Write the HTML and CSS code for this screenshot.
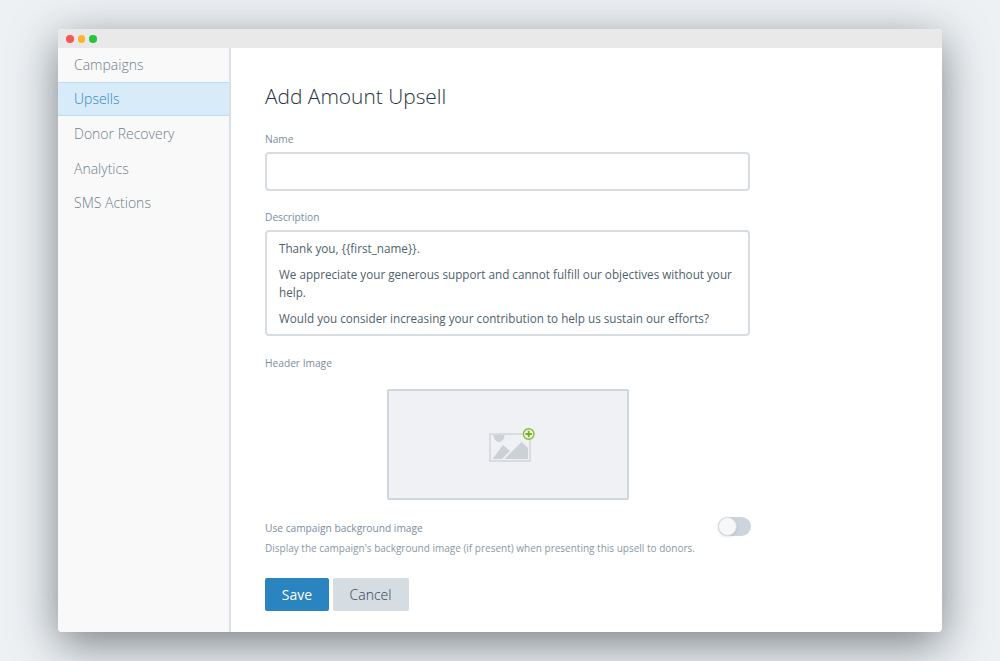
FILE: index.html
```html
<!DOCTYPE html>
<html lang="en">
<head>
<meta charset="utf-8">
<title>Add Amount Upsell</title>
<link rel="stylesheet" href="styles.css">
</head>
<body>
<div class="window">
  <div class="titlebar">
    <span class="dot dot-red"></span><span class="dot dot-yellow"></span><span class="dot dot-green"></span>
  </div>
  <div class="body">
    <nav class="sidebar">
      <a class="nav-item">Campaigns</a>
      <a class="nav-item active">Upsells</a>
      <a class="nav-item">Donor Recovery</a>
      <a class="nav-item">Analytics</a>
      <a class="nav-item">SMS Actions</a>
    </nav>
    <main class="content">
      <h1 class="title">Add Amount Upsell</h1>
      <div class="label name-label">Name</div>
      <div class="input"></div>
      <div class="label desc-label">Description</div>
      <div class="textarea">
        <p>Thank you, {{first_name}}.</p>
        <p>We appreciate your generous support and cannot fulfill our objectives without your help.</p>
        <p>Would you consider increasing your contribution to help us sustain our efforts?</p>
      </div>
      <div class="label header-label">Header Image</div>
      <div class="dropzone">
        <svg class="image-icon" width="46" height="34" viewBox="0 0 46 34">
          <rect x="1" y="6" width="40" height="27" fill="none" stroke="#d3d8dd" stroke-width="1.6"/>
          <path d="M4.5 7a5.5 7 0 0 0 11 0z" fill="#ccd1d6"/>
          <path d="M3.5 31 L14 17 L21 23 L13 31z" fill="#ccd1d6"/>
          <path d="M15.5 31 L32.7 13.7 L39 20 L39 31z" fill="#ccd1d6"/>
          <circle cx="39.7" cy="6" r="5.3" fill="#eff1f5" stroke="#86bc2b" stroke-width="1.4"/>
          <path d="M39.7 2.8v6.4M36.5 6h6.4" stroke="#74ae1c" stroke-width="1.8"/>
        </svg>
      </div>
      <div class="toggle-row">
        <span class="label">Use campaign background image</span>
        <span class="toggle"><span class="knob"></span></span>
      </div>
      <div class="hint">Display the campaign's background image (if present) when presenting this upsell to donors.</div>
      <div class="actions">
        <button class="btn btn-save">Save</button>
        <button class="btn btn-cancel">Cancel</button>
      </div>
    </main>
  </div>
</div>
</body>
</html>
```
FILE: styles.css
```css
* { box-sizing: border-box; }
html, body { height: 100%; }
body {
  margin: 0;
  padding: 29px 58px 0;
  background: #edf1f4;
  font-family: "Open Sans", "Liberation Sans", sans-serif;
  overflow: hidden;
}
.window {
  width: 884px;
  height: 603px;
  border-radius: 4px;
  background: #fff;
  overflow: hidden;
  display: flex;
  flex-direction: column;
  box-shadow: 0 12px 45px rgba(30, 35, 40, 0.55);
}
.titlebar {
  height: 19px;
  flex: none;
  background: #e9e9e9;
  display: flex;
  align-items: center;
  gap: 4px;
  padding: 1px 0 0 8px;
}
.dot { width: 7.5px; height: 7.5px; border-radius: 50%; }
.dot-red { background: #f9565a; }
.dot-yellow { background: #fbb42c; }
.dot-green { background: #27c43f; }
.body { flex: 1; display: flex; min-height: 0; }
.sidebar {
  width: 173px;
  flex: none;
  background: #f9f9f9;
  border-right: 2px solid #d9dfe4;
}
.nav-item {
  display: flex;
  align-items: center;
  height: 34.6px;
  padding-left: 16px;
  font-size: 14px;
  font-weight: 300;
  color: #6f7f8c;
}
.nav-item:first-child { height: 33.6px; padding-bottom: 1px; }
.nav-item.active {
  background: #d7ebf8;
  color: #2f87c1;
  border-top: 1px solid #bcdcf2;
  border-bottom: 1px solid #bcdcf2;
}
.content { flex: 1; padding: 33px 0 0 34px; min-width: 0; }
.title {
  margin: 0;
  font-size: 20.9px;
  font-weight: 300;
  line-height: 30px;
  color: #1f3344;
}
.label { font-size: 10.2px; line-height: 14px; color: #7c8c9b; display: block; }
.name-label { margin-top: 21px; }
.input, .textarea {
  width: 485px;
  border: 2px solid #d8dde2;
  border-radius: 4px;
  background: #fff;
}
.input { height: 39px; margin-top: 6px; }
.desc-label { margin-top: 19px; }
.textarea {
  height: 106px;
  margin-top: 6px;
  padding: 7px 12px;
  font-size: 11.7px;
  line-height: 18px;
  color: #4f5f6d;
}
.textarea p { margin: 0 0 8px; }
.header-label { margin-top: 20px; }
.dropzone {
  width: 242px;
  height: 111px;
  margin: 19px 0 0 122px;
  border: 2px solid #d0d6dc;
  border-radius: 2px;
  background: #eff1f5;
  display: flex;
  align-items: center;
  justify-content: center;
}
.image-icon { margin-left: 8px; }
.toggle-row {
  width: 486px;
  margin-top: 17px;
  display: flex;
  align-items: center;
  justify-content: space-between;
}
.toggle-row .label { position: relative; top: 1px; }
.toggle {
  position: relative;
  width: 33px;
  height: 19px;
  border-radius: 10px;
  background: #ccd5dd;
}
.knob {
  position: absolute;
  left: 0;
  top: 0;
  width: 19px;
  height: 19px;
  border-radius: 50%;
  background: #f7f7f7;
  border: 1px solid #d8dde2;
  box-shadow: 0 1px 3px rgba(0, 0, 0, 0.12);
}
.hint { margin-top: 5px; font-size: 10px; line-height: 14px; color: #8a97a3; }
.actions { margin-top: 23px; display: flex; gap: 3.5px; }
.btn {
  height: 33px;
  border: 0;
  border-radius: 2px;
  font-family: inherit;
  font-size: 14px;
  padding: 0;
}
.btn-save { width: 64px; background: #2a84c0; color: #fff; }
.btn-cancel { width: 76px; background: #d5dce2; color: #2f4154; font-weight: 300; }
```
